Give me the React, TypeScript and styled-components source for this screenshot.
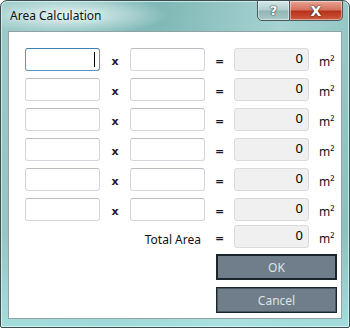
import React from 'react';
import styled, { createGlobalStyle } from 'styled-components';

const Global = createGlobalStyle`
  html, body {
    margin: 0;
    padding: 0;
    background: #ffffff;
  }
  body {
    font-family: 'Noto Sans', 'Open Sans', sans-serif;
  }
`;

const Window = styled.div`
  box-sizing: border-box;
  width: 350px;
  height: 328px;
  display: flex;
  flex-direction: column;
  border: 1px solid #3b4d4f;
  border-radius: 7px 7px 2px 2px;
  padding: 0 7px 8px 7px;
  background:
    radial-gradient(ellipse 140px 28px at 70px 14px, rgba(235, 248, 247, 0.9), rgba(235, 248, 247, 0) 70%),
    linear-gradient(180deg, rgba(0, 0, 0, 0) 70%, rgba(170, 228, 228, 0.8) 100%),
    linear-gradient(100deg, #9ccbca 0%, #7fb8b6 40%, #a7d3d2 70%, #86bebc 100%);
  box-shadow: inset 0 0 0 1px rgba(230, 250, 250, 0.7);
  overflow: hidden;
`;

const TitleBar = styled.div`
  flex: 0 0 30px;
  display: flex;
  align-items: flex-start;
  justify-content: space-between;
`;

const Title = styled.span`
  margin: 6px 0 0 2px;
  font-family: 'Noto Sans', 'Open Sans', sans-serif;
  font-size: 12px;
  color: #111;
  text-shadow: 0 0 6px rgba(255, 255, 255, 0.9);
`;

const Caption = styled.div`
  display: flex;
  margin-top: -1px;
  margin-right: -1px;
`;

const CaptionButton = styled.div<{ $kind: 'help' | 'close' }>`
  box-sizing: border-box;
  height: 21px;
  width: ${(p) => (p.$kind === 'close' ? '53px' : '33px')};
  display: flex;
  align-items: center;
  justify-content: center;
  border: 1px solid #4a5a5c;
  border-left-width: ${(p) => (p.$kind === 'close' ? '0' : '1px')};
  border-radius: ${(p) => (p.$kind === 'close' ? '0 0 5px 0' : '0 0 0 5px')};
  background: ${(p) =>
    p.$kind === 'close'
      ? 'linear-gradient(180deg, #e8a493 0%, #d4735f 45%, #b8321c 55%, #cd5a3d 100%)'
      : 'linear-gradient(180deg, #d6e7e7 0%, #b3cfcf 45%, #93b6b6 55%, #a9c8c8 100%)'};
  box-shadow: inset 0 0 0 1px rgba(255, 255, 255, 0.45);
  font-family: 'DejaVu Sans', sans-serif;
  font-weight: bold;
  font-size: ${(p) => (p.$kind === 'close' ? '14px' : '13px')};
  color: #ffffff;
  text-shadow: 0 0 1px #2b3436, 0 0 2px #2b3436;
`;

const Client = styled.div`
  flex: 1 1 auto;
  box-sizing: border-box;
  background: #ffffff;
  border: 1px solid #8fa3a4;
  display: flex;
  flex-direction: column;
  padding: 16px 0 0 16px;
`;

const Grid = styled.div<{ $top?: number }>`
  display: grid;
  grid-template-columns: 75px 30px 75px 29px 75px 32px;
  grid-auto-rows: 23px;
  row-gap: 7px;
  align-items: center;
  margin-top: ${(p) => p.$top ?? 0}px;
`;

const Field = styled.div<{ $focused?: boolean }>`
  box-sizing: border-box;
  height: 23px;
  border: 1px solid ${(p) => (p.$focused ? '#5f95c4' : '#d3d6db')};
  border-top-color: ${(p) => (p.$focused ? '#3c7fb1' : '#b9bdc3')};
  border-radius: 3px;
  background: #ffffff;
  display: flex;
  align-items: center;
  justify-content: flex-end;
  padding-right: 4px;
`;

const Caret = styled.span`
  width: 1px;
  height: 15px;
  background: #000;
`;

const Result = styled.div`
  box-sizing: border-box;
  height: 23px;
  border: 1px solid #dadada;
  border-radius: 3px;
  background: #f0f0f0;
  display: flex;
  align-items: center;
  justify-content: flex-end;
  padding: 0 5px 3px 0;
  font-size: 13px;
  color: #000;
`;

const Sign = styled.span`
  text-align: center;
  font-family: 'DejaVu Sans', sans-serif;
  font-size: 11px;
  font-weight: bold;
  color: #1a1a2a;
  padding-top: 3px;
`;

const Unit = styled.span`
  padding: 3px 0 0 10px;
  font-size: 12px;
  color: #111;
`;

const Label = styled.span`
  grid-column: 1 / 4;
  justify-self: end;
  padding: 5px 4px 0 0;
  font-size: 12px;
  color: #111;
`;

const Buttons = styled.div`
  display: flex;
  flex-direction: column;
  align-items: flex-end;
  gap: 7px;
  margin: 6px 4px 0 0;
`;

const Button = styled.div<{ $default?: boolean }>`
  box-sizing: border-box;
  width: 121px;
  height: 26px;
  display: flex;
  align-items: center;
  justify-content: center;
  background: #6f7e8a;
  border: ${(p) => (p.$default ? '2px solid #1b252c' : '1px solid #1b252c')};
  box-shadow: ${(p) => (p.$default ? 'none' : 'inset 0 0 0 1px #4a5660')};
  font-size: 12px;
  color: #dde2e6;
`;

const rows = [0, 1, 2, 3, 4, 5];

export default function App() {
  return (
    <>
      <Global />
      <Window>
        <TitleBar>
          <Title>Area Calculation</Title>
          <Caption>
            <CaptionButton $kind="help">?</CaptionButton>
            <CaptionButton $kind="close">X</CaptionButton>
          </Caption>
        </TitleBar>
        <Client>
          <Grid>
            {rows.map((i) => (
              <React.Fragment key={i}>
                <Field $focused={i === 0}>{i === 0 && <Caret />}</Field>
                <Sign>x</Sign>
                <Field />
                <Sign>=</Sign>
                <Result>0</Result>
                <Unit>m²</Unit>
              </React.Fragment>
            ))}
          </Grid>
          <Grid $top={4}>
            <Label>Total Area</Label>
            <Sign>=</Sign>
            <Result>0</Result>
            <Unit>m²</Unit>
          </Grid>
          <Buttons>
            <Button $default>OK</Button>
            <Button>Cancel</Button>
          </Buttons>
        </Client>
      </Window>
    </>
  );
}
